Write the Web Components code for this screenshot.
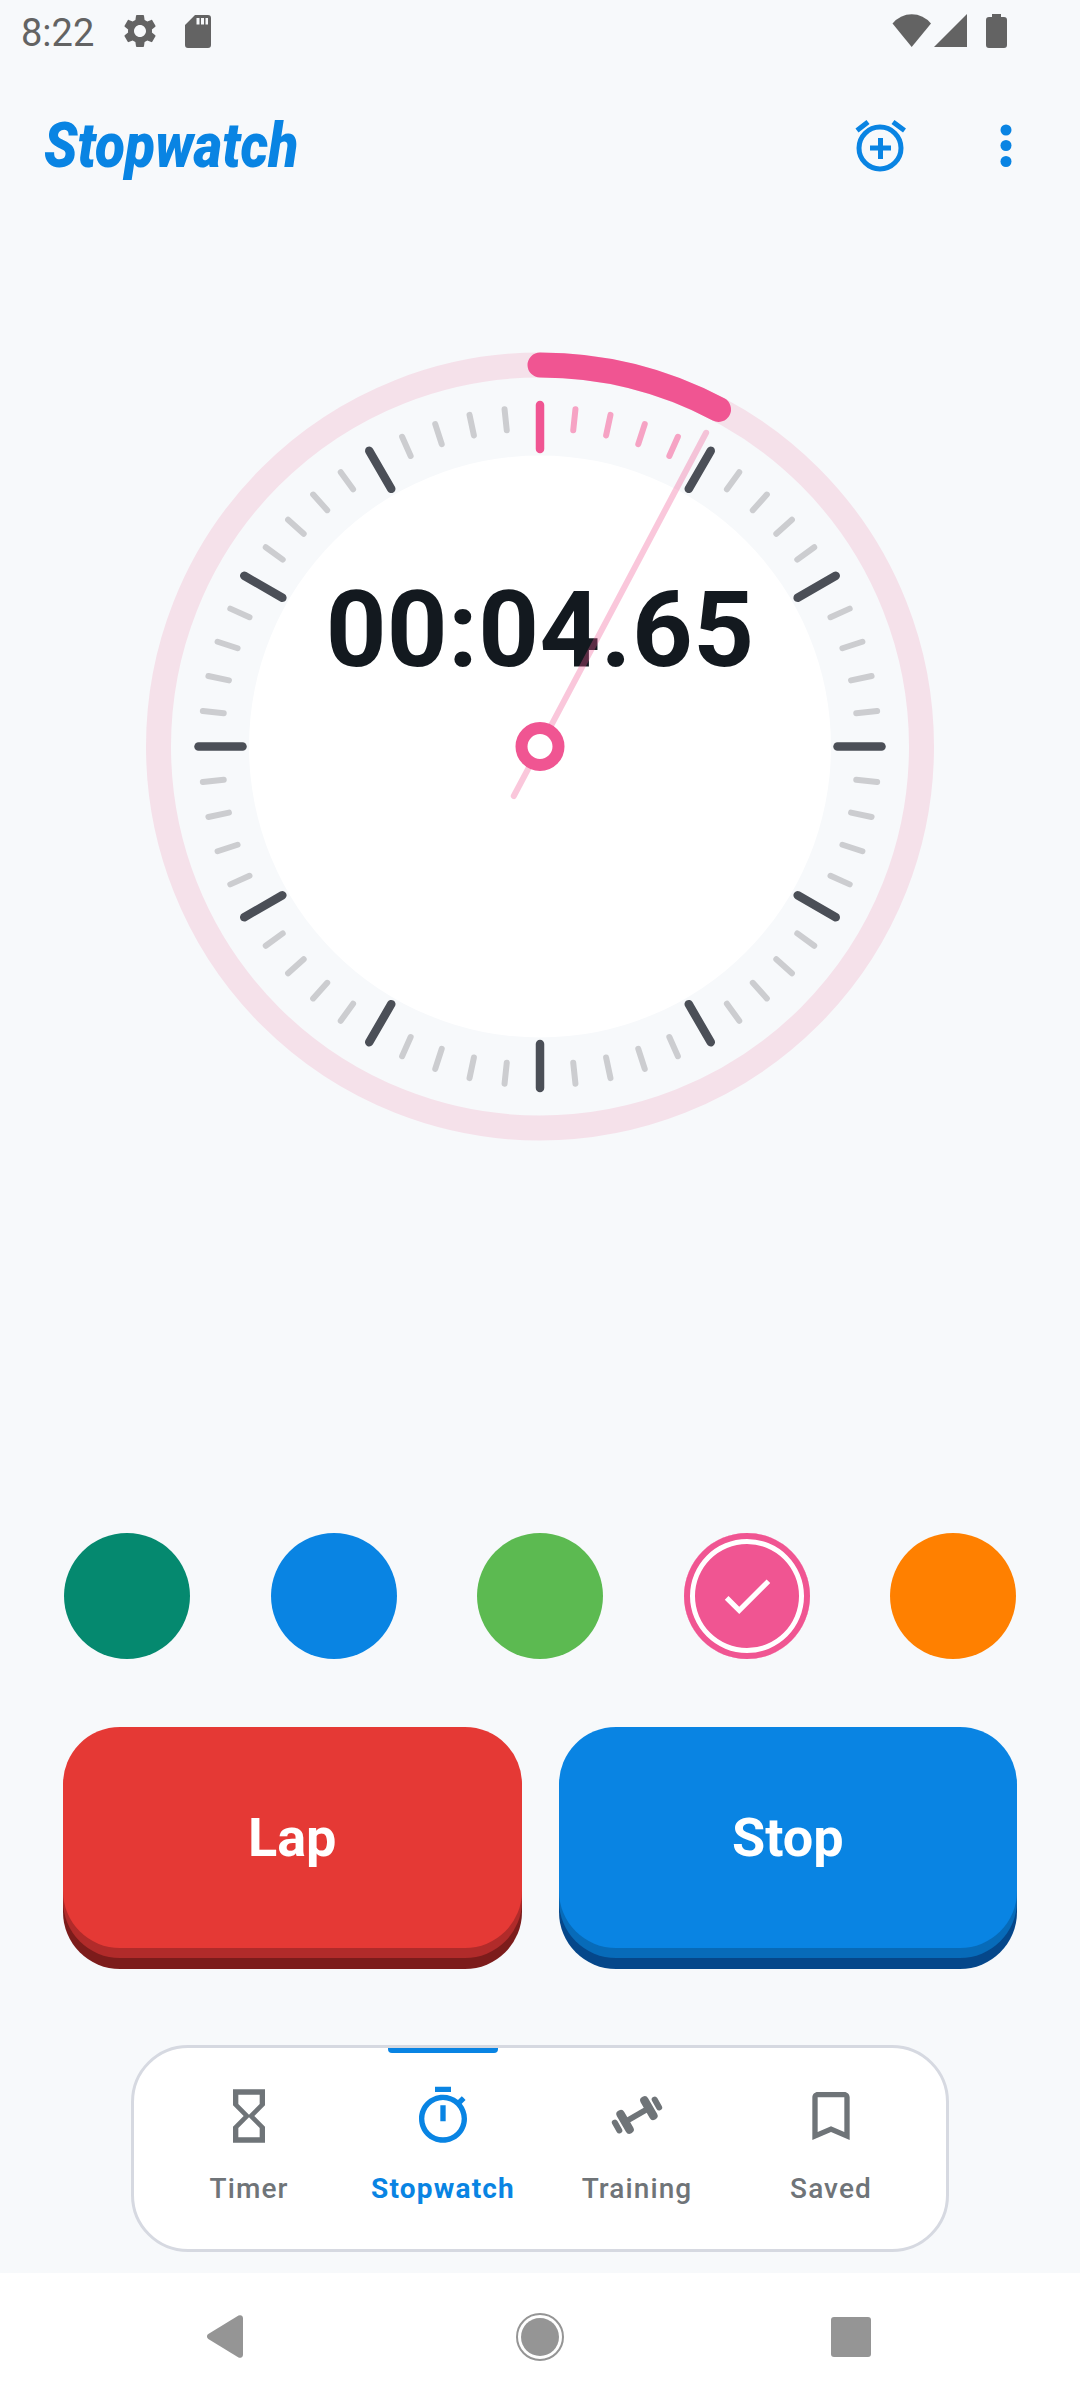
<!DOCTYPE html>
<html>
<head>
<meta charset="utf-8">
<style>
html, body { margin: 0; padding: 0; }
body {
  width: 1080px;
  height: 2400px;
  overflow: hidden;
  background: #f7f9fb;
  font-family: Roboto, "Liberation Sans", sans-serif;
  display: flex;
  flex-direction: column;
}
status-bar { height: 64px; }
app-header { height: 164px; }
stop-dial { margin: 125px 0 0 147px; }
swatch-row { margin-top: 393px; }
action-row { margin-top: 68px; }
bottom-nav { margin: 97px 0 0 131px; }
system-nav { margin-top: 21px; }
</style>
</head>
<body>
<status-bar></status-bar>
<app-header>Stopwatch</app-header>
<stop-dial time="00:04.65" seconds="4.65"></stop-dial>
<swatch-row>
  <color-swatch color="#05896f"></color-swatch>
  <color-swatch color="#0984e3"></color-swatch>
  <color-swatch color="#5cba51"></color-swatch>
  <color-swatch color="#f05592" selected></color-swatch>
  <color-swatch color="#ff8000"></color-swatch>
</swatch-row>
<action-row>
  <action-button face="#e53935" mid="#b12b2a" edge="#7c1c1b">Lap</action-button>
  <action-button face="#0984e3" mid="#076bb9" edge="#05478a">Stop</action-button>
</action-row>
<bottom-nav>
  <nav-item>
    <svg slot="icon" viewBox="0 0 24 24" width="64" height="64" fill="currentColor"><path d="M6 2v6h.01L6 8.01 10 12l-4 4 .01.01H6V22h12v-5.99h-.01L18 16l-4-4 4-3.99-.01-.01H18V2H6zm10 14.5V20H8v-3.5l4-4 4 4zm-4-5l-4-4V4h8v3.5l-4 4z"/></svg>
    Timer
  </nav-item>
  <nav-item active>
    <svg slot="icon" viewBox="0 0 24 24" width="64" height="64" fill="currentColor"><path d="M9 1h6v2H9zm10.03 6.39l1.42-1.42c-.43-.51-.9-.99-1.41-1.41l-1.42 1.42C16.07 4.74 14.12 4 12 4c-4.97 0-9 4.03-9 9s4.02 9 9 9 9-4.03 9-9c0-2.12-.74-4.07-1.97-5.61zM12 20c-3.87 0-7-3.13-7-7s3.13-7 7-7 7 3.13 7 7-3.13 7-7 7zm-1-12h2v6h-2z"/></svg>
    Stopwatch
  </nav-item>
  <nav-item>
    <svg slot="icon" viewBox="-32 -32 64 64" width="64" height="64" fill="currentColor">
      <g transform="translate(0 -1) rotate(-30)">
        <rect x="-14" y="-3" width="28" height="6"/>
        <rect x="-18" y="-13" width="8.5" height="26" rx="4"/>
        <rect x="9.5" y="-13" width="8.5" height="26" rx="4"/>
        <rect x="-26" y="-7.5" width="6" height="15" rx="3"/>
        <rect x="20" y="-7.5" width="6" height="15" rx="3"/>
      </g>
    </svg>
    Training
  </nav-item>
  <nav-item>
    <svg slot="icon" viewBox="0 0 24 24" width="64" height="64" fill="currentColor"><path d="M17 3H7c-1.1 0-2 .9-2 2v16l7-3 7 3V5c0-1.1-.9-2-2-2zm0 15l-5-2.18L7 18V5h10v13z"/></svg>
    Saved
  </nav-item>
</bottom-nav>
<system-nav></system-nav>

<script>
const statusHtml = `
<style>
:host { display: flex; align-items: flex-start; color: #636363; position: relative; }
.time { font: 400 38px/1 Roboto, sans-serif; margin: 14px 0 0 21px; width: 83px; }
svg { display: block; fill: currentColor; flex: none; }
.gear { margin: 11px 0 0 16px; }
.sd { margin: 15px 0 0 25px; }
.right { margin: 14px 0 0 auto; padding-right: 73px; display: flex; }
.signal { margin-left: 2px; }
.battery { margin-left: 19px; }
</style>
<span class="time">8:22</span>
<svg class="gear" width="40" height="40" viewBox="0 0 24 24"><path d="M19.14,12.94c0.04-0.3,0.06-0.61,0.06-0.94c0-0.32-0.02-0.64-0.07-0.94l2.03-1.58c0.18-0.14,0.23-0.41,0.12-0.61 l-1.92-3.32c-0.12-0.22-0.37-0.29-0.59-0.22l-2.39,0.96c-0.5-0.38-1.03-0.7-1.62-0.94L14.4,2.81c-0.04-0.24-0.24-0.41-0.48-0.41 h-3.84c-0.24,0-0.43,0.17-0.47,0.41L9.25,5.35C8.66,5.59,8.12,5.92,7.63,6.29L5.24,5.33c-0.22-0.08-0.47,0-0.59,0.22L2.74,8.87 C2.62,9.08,2.66,9.34,2.86,9.48l2.03,1.58C4.84,11.36,4.8,11.69,4.8,12s0.02,0.64,0.07,0.94l-2.03,1.58 c-0.18,0.14-0.23,0.41-0.12,0.61l1.92,3.32c0.12,0.22,0.37,0.29,0.59,0.22l2.39-0.96c0.5,0.38,1.03,0.7,1.62,0.94l0.36,2.54 c0.05,0.24,0.24,0.41,0.48,0.41h3.84c0.24,0,0.44-0.17,0.47-0.41l0.36-2.54c0.59-0.24,1.13-0.56,1.62-0.94l2.39,0.96 c0.22,0.08,0.47,0,0.59-0.22l1.92-3.32c0.12-0.22,0.07-0.47-0.12-0.61L19.14,12.94z M12,15.6c-1.98,0-3.6-1.62-3.6-3.6 s1.62-3.6,3.6-3.6s3.6,1.62,3.6,3.6S13.98,15.6,12,15.6z"/></svg>
<svg class="sd" width="26" height="33" viewBox="0 0 26 33"><path fill-rule="evenodd" d="M10 0H23a3 3 0 0 1 3 3V30a3 3 0 0 1-3 3H3a3 3 0 0 1-3-3V10ZM11.5 3v6.5h3V3ZM16 3v6.5h3V3ZM20.5 3v6.5h2.5V3Z"/></svg>
<div class="right">
  <svg width="40" height="33" viewBox="0 0 40 33"><path d="M19.7 33L.5 9.5A24.800 24.800 0 0 1 39 9.500Z"/></svg>
  <svg class="signal" width="33" height="33" viewBox="0 0 33 33"><path d="M33 0V33H0Z"/></svg>
  <svg class="battery" width="21" height="34" viewBox="0 0 21 34"><path d="M6 0h9v3h3a3 3 0 0 1 3 3V31a3 3 0 0 1-3 3H3a3 3 0 0 1-3-3V6a3 3 0 0 1 3-3h3Z"/></svg>
</div>
`;

const headerHtml = `
<style>
:host { display: flex; align-items: center; color: #0984e3; position: relative; }
.title {
  font: italic 900 62px/1 Roboto, sans-serif;
  margin: 2px 0 0 44px;
  transform: scaleX(.888);
  transform-origin: left center;
  white-space: nowrap;
}
.actions { margin-left: auto; display: flex; align-items: center; padding: 2px 68px 0 0; }
svg { display: block; }
.dots { margin-left: 90px; }
</style>
<span class="title"><slot></slot></span>
<div class="actions">
  <svg width="60" height="60" viewBox="850 117 60 60" fill="none" stroke="currentColor" stroke-width="5">
    <circle cx="880" cy="149" r="21"/>
    <path d="M857 131.500L868 123M893 123L904.500 131.500"/>
    <path d="M870 149H891M880.500 139V160"/>
  </svg>
  <svg class="dots" width="12" height="44" viewBox="0 0 12 44" fill="currentColor">
    <circle cx="6" cy="6" r="5.500"/><circle cx="6" cy="21.500" r="5.500"/><circle cx="6" cy="37.500" r="5.500"/>
  </svg>
</div>
`;

class StatusBar extends HTMLElement {
  constructor() {
    super();
    this.attachShadow({mode: 'open'}).innerHTML = statusHtml;
  }
}
class AppHeader extends HTMLElement {
  constructor() {
    super();
    this.attachShadow({mode: 'open'}).innerHTML = headerHtml;
  }
}

class StopDial extends HTMLElement {
  constructor() {
    super();
    const secs = parseFloat(this.getAttribute('seconds'));
    const deg = secs * 6;
    const rad = deg * Math.PI / 180;
    let ticks = '';
    for (let i = 0; i < 60; i++) {
      const major = i % 5 == 0;
      const passed = i * 6 <= deg;
      const color = major ? (i == 0 ? '#f05592' : '#4b4f57') : (passed ? '#f6a3c4' : '#cccdd0');
      ticks += major
        ? `<line transform="rotate(${i * 6})" y1="-341.500" y2="-297.500" stroke="${color}" stroke-width="8.500"/>`
        : `<line transform="rotate(${i * 6})" y1="-339" y2="-318" stroke="${color}" stroke-width="6"/>`;
    }
    const endX = 381.5 * Math.sin(rad);
    const endY = -381.5 * Math.cos(rad);
    this.attachShadow({mode: 'open'}).innerHTML = `
<style>
:host { display: block; width: 786px; height: 788px; }
svg { display: block; overflow: visible; }
text { font: 700 106px Roboto, sans-serif; fill: #13191f; letter-spacing: .4px; }
</style>
<svg width="786" height="788" viewBox="-393 -394.500 786 788" fill="none" stroke-linecap="round">
  <circle r="381.500" stroke="#f5e1ea" stroke-width="25"/>
  <circle r="291" fill="#fff"/>
  <path d="M0 -381.500A381.500 381.500 0 0 1 ${endX} ${endY}" stroke="#f05592" stroke-width="25"/>
  <g>${ticks}</g>
  <text x="0" y="-81" text-anchor="middle">${this.getAttribute('time')}</text>
  <line x1="${-56 * Math.sin(rad)}" y1="${56 * Math.cos(rad)}" x2="${355 * Math.sin(rad)}" y2="${-355 * Math.cos(rad)}" stroke="#f05592" stroke-opacity=".33" stroke-width="6"/>
  <circle r="18.500" fill="#fff" stroke="#f05592" stroke-width="12"/>
</svg>`;
  }
}

class ColorSwatch extends HTMLElement {
  constructor() {
    super();
    const color = this.getAttribute('color');
    const check = this.hasAttribute('selected')
      ? '<svg width="62" height="62" viewBox="0 0 24 24" fill="#fff"><path d="M9 16.170L4.830 12l-1.420 1.410L9 19 21 7l-1.410-1.410z"/></svg>'
      : '';
    this.attachShadow({mode: 'open'}).innerHTML = `
<style>
:host {
  display: flex; align-items: center; justify-content: center;
  width: 126px; height: 126px; border-radius: 50%;
  background: ${color};
}
:host([selected]) { box-shadow: inset 0 0 0 6px ${color}, inset 0 0 0 11px #fff; }
</style>${check}`;
  }
}

class SwatchRow extends HTMLElement {
  constructor() {
    super();
    this.attachShadow({mode: 'open'}).innerHTML = `
<style>:host { display: flex; justify-content: space-between; padding: 0 64px; }</style><slot></slot>`;
  }
}

class ActionRow extends HTMLElement {
  constructor() {
    super();
    this.attachShadow({mode: 'open'}).innerHTML = `
<style>:host { display: flex; gap: 37px; padding: 0 63px; }</style><slot></slot>`;
  }
}

class ActionButton extends HTMLElement {
  constructor() {
    super();
    this.attachShadow({mode: 'open'}).innerHTML = `
<style>
:host {
  display: flex; align-items: center; justify-content: center;
  flex: 1; height: 221px; border-radius: 57px;
  background: ${this.getAttribute('face')};
  box-shadow: 0 10px 0 ${this.getAttribute('mid')}, 0 21px 0 ${this.getAttribute('edge')};
  color: #fff; font: 700 54px/1 Roboto, sans-serif;
}
</style><slot></slot>`;
  }
}

class BottomNav extends HTMLElement {
  constructor() {
    super();
    this.attachShadow({mode: 'open'}).innerHTML = `
<style>
:host {
  display: grid; grid-template-columns: repeat(4, 1fr);
  box-sizing: border-box; width: 818px; height: 208px; padding: 0 18px;
  background: #fff; border: 3px solid #d6d9e1; border-radius: 57px;
}
</style><slot></slot>`;
  }
}

class NavItem extends HTMLElement {
  constructor() {
    super();
    this.attachShadow({mode: 'open'}).innerHTML = `
<style>
:host {
  display: flex; flex-direction: column; align-items: center;
  position: relative; padding-top: 36px;
  color: #6f7478; font: 500 28px/1 Roboto, sans-serif; letter-spacing: 1.1px;
}
:host([active]) { color: #0984e3; font-weight: 700; letter-spacing: 1.2px; }
:host([active])::before {
  content: ''; position: absolute; top: 0; left: 42px;
  width: 110px; height: 5px; background: #0984e3; border-radius: 0 0 4px 4px;
}
.label { margin-top: 27px; white-space: nowrap; }
</style>
<slot name="icon"></slot>
<span class="label"><slot></slot></span>`;
  }
}

class SystemNav extends HTMLElement {
  constructor() {
    super();
    this.attachShadow({mode: 'open'}).innerHTML = `
<style>
:host {
  display: flex; align-items: center; height: 127px; padding-left: 207px; box-sizing: border-box;
  background: #fff;
}
svg { display: block; fill: #959595; flex: none; }
.home { margin: 0 267px 0 273px; }
</style>
<svg width="36" height="43" viewBox="0 0 36 43"><path d="M31.500.600 1.300 19a3 3 0 0 0 0 5L31.500 42.400A3 3 0 0 0 36 40V3A3 3 0 0 0 31.500.600Z"/></svg>
<svg class="home" width="48" height="48" viewBox="0 0 48 48"><circle cx="24" cy="24" r="23" fill="none" stroke="#959595" stroke-width="2"/><circle cx="24" cy="24" r="19"/></svg>
<svg width="40" height="40" viewBox="0 0 40 40"><rect width="40" height="40" rx="3"/></svg>`;
  }
}

window.customElements.define('status-bar', StatusBar);
window.customElements.define('app-header', AppHeader);
window.customElements.define('stop-dial', StopDial);
window.customElements.define('color-swatch', ColorSwatch);
window.customElements.define('swatch-row', SwatchRow);
window.customElements.define('action-row', ActionRow);
window.customElements.define('action-button', ActionButton);
window.customElements.define('bottom-nav', BottomNav);
window.customElements.define('nav-item', NavItem);
window.customElements.define('system-nav', SystemNav);
</script>
</body>
</html>
